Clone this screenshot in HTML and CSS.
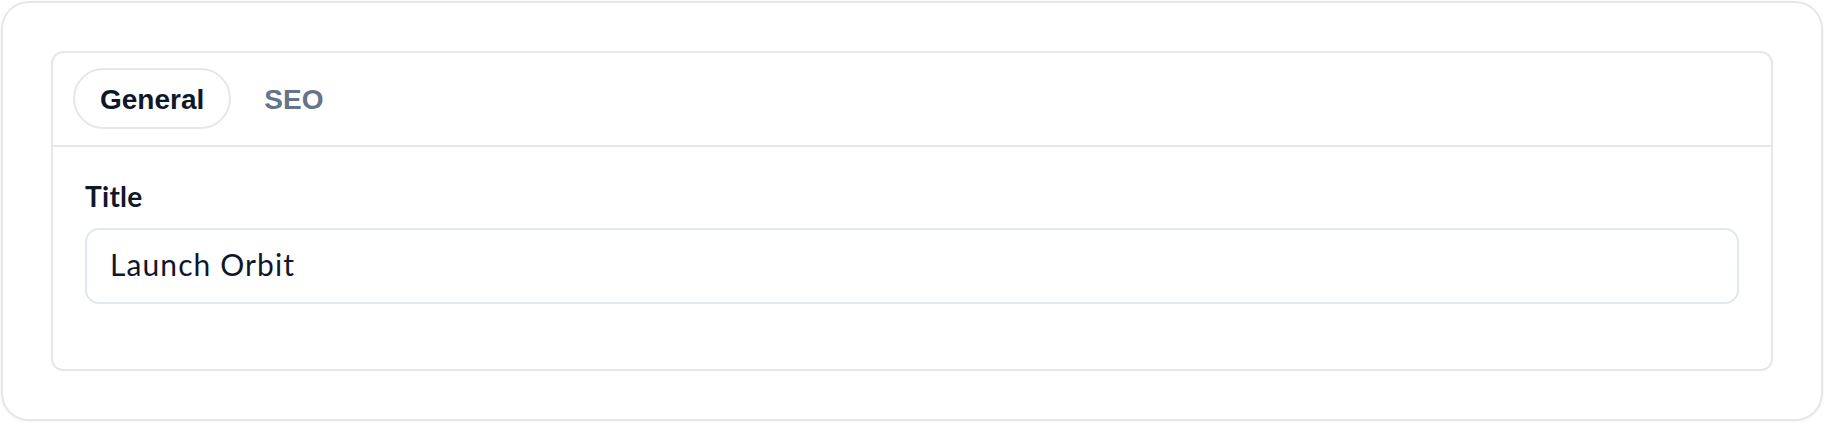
FILE: index.html
```html
<!DOCTYPE html>
<html lang="en">
<head>
<meta charset="utf-8">
<title>Editor</title>
<link rel="stylesheet" href="styles.css">
</head>
<body>
<div class="frame">
  <section class="card">
    <nav class="tabs">
      <button class="tab tab-active">General</button>
      <button class="tab">SEO</button>
    </nav>
    <div class="panel">
      <div class="field">
        <label class="label">Title</label>
        <div class="control">Launch Orbit</div>
      </div>
    </div>
  </section>
</div>
</body>
</html>
```
FILE: styles.css
```css
html, body {
  margin: 0;
  padding: 0;
  background: #ffffff;
}

body {
  font-family: "Lato", "Liberation Sans", sans-serif;
  color: #0f172a;
}

.frame {
  box-sizing: border-box;
  margin: 1px;
  height: 420px;
  border: 2px solid #e5e7eb;
  border-radius: 28px;
  padding: 48px;
  background: #ffffff;
  box-shadow: 0 1px 3px rgba(15, 23, 42, 0.06);
}

.card {
  border: 2px solid #e5e7eb;
  border-radius: 12px;
  background: #ffffff;
}

.tabs {
  display: flex;
  gap: 6px;
  padding: 15px 20px 16px;
  border-bottom: 2px solid #e5e7eb;
}

.tab {
  box-sizing: border-box;
  height: 61px;
  padding: 2px 25px 0;
  border: 2px solid transparent;
  border-radius: 999px;
  background: transparent;
  font-family: "Liberation Sans", Arial, sans-serif;
  font-weight: 700;
  font-size: 28px;
  color: #64748b;
  display: flex;
  align-items: center;
}

.tab-active {
  border-color: #e5e7eb;
  color: #0f172a;
}

.panel {
  padding: 32px 32px 33px;
}

.field {
  display: flex;
  flex-direction: column;
  margin-bottom: 32px;
}

.label {
  font-family: "Lato", sans-serif;
  font-weight: 700;
  font-size: 28px;
  line-height: 34px;
  letter-spacing: 0.3px;
  color: #0f172a;
  margin-bottom: 15px;
}

.control {
  box-sizing: border-box;
  height: 76px;
  padding: 17px 23px 0;
  border: 2px solid #e2e8f0;
  border-radius: 14px;
  font-family: "Lato", sans-serif;
  font-size: 30px;
  line-height: 35px;
  letter-spacing: 1.1px;
  color: #0f172a;
}
```
